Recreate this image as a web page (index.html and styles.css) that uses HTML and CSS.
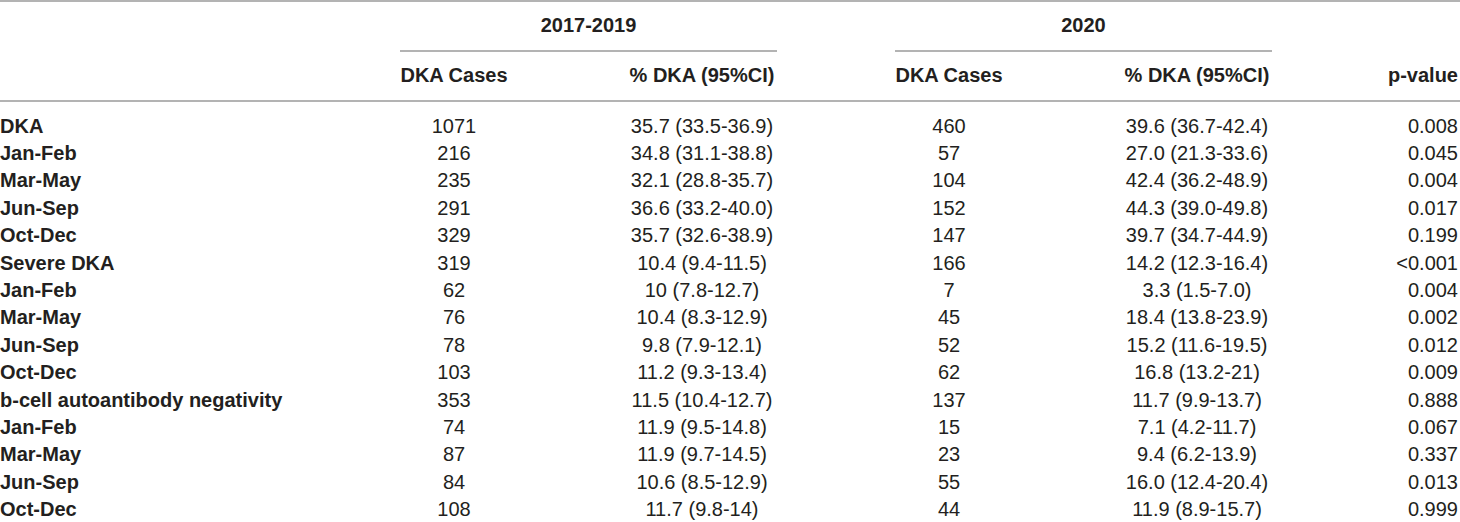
FILE: index.html
```html
<!DOCTYPE html>
<html>
  <head>
    <meta name='viewport' content='width=device-width, initial-scale=1'>
    <title>DKA Table</title>
    <link rel="stylesheet" href="styles.css">
  </head>
<body>

<table class='dka'>
  <colgroup>
    <col class='c-label'>
    <col class='c-cases'>
    <col class='c-pct'>
    <col class='c-cases2'>
    <col class='c-pct'>
    <col class='c-p'>
  </colgroup>
  <thead>
    <tr class='group'>
      <th></th>
      <th colspan=2><div class='grp'>2017-2019</div></th>
      <th colspan=2 class='grp2'><div class='grp'>2020</div></th>
      <th></th>
    </tr>
    <tr class='sub'>
      <th></th>
      <th class='num'>DKA Cases</th>
      <th class='pct'>% DKA (95%CI)</th>
      <th class='num2'>DKA Cases</th>
      <th class='pct'>% DKA (95%CI)</th>
      <th class='pv'>p-value</th>
    </tr>
  </thead>
  <tbody>
    <tr><td class='lbl'>DKA</td><td class='num'>1071</td><td class='pct'>35.7 (33.5-36.9)</td><td class='num2'>460</td><td class='pct'>39.6 (36.7-42.4)</td><td class='pv'>0.008</td></tr>
    <tr><td class='lbl'>Jan-Feb</td><td class='num'>216</td><td class='pct'>34.8 (31.1-38.8)</td><td class='num2'>57</td><td class='pct'>27.0 (21.3-33.6)</td><td class='pv'>0.045</td></tr>
    <tr><td class='lbl'>Mar-May</td><td class='num'>235</td><td class='pct'>32.1 (28.8-35.7)</td><td class='num2'>104</td><td class='pct'>42.4 (36.2-48.9)</td><td class='pv'>0.004</td></tr>
    <tr><td class='lbl'>Jun-Sep</td><td class='num'>291</td><td class='pct'>36.6 (33.2-40.0)</td><td class='num2'>152</td><td class='pct'>44.3 (39.0-49.8)</td><td class='pv'>0.017</td></tr>
    <tr><td class='lbl'>Oct-Dec</td><td class='num'>329</td><td class='pct'>35.7 (32.6-38.9)</td><td class='num2'>147</td><td class='pct'>39.7 (34.7-44.9)</td><td class='pv'>0.199</td></tr>
    <tr><td class='lbl'>Severe DKA</td><td class='num'>319</td><td class='pct'>10.4 (9.4-11.5)</td><td class='num2'>166</td><td class='pct'>14.2 (12.3-16.4)</td><td class='pv'>&lt;0.001</td></tr>
    <tr><td class='lbl'>Jan-Feb</td><td class='num'>62</td><td class='pct'>10 (7.8-12.7)</td><td class='num2'>7</td><td class='pct'>3.3 (1.5-7.0)</td><td class='pv'>0.004</td></tr>
    <tr><td class='lbl'>Mar-May</td><td class='num'>76</td><td class='pct'>10.4 (8.3-12.9)</td><td class='num2'>45</td><td class='pct'>18.4 (13.8-23.9)</td><td class='pv'>0.002</td></tr>
    <tr><td class='lbl'>Jun-Sep</td><td class='num'>78</td><td class='pct'>9.8 (7.9-12.1)</td><td class='num2'>52</td><td class='pct'>15.2 (11.6-19.5)</td><td class='pv'>0.012</td></tr>
    <tr><td class='lbl'>Oct-Dec</td><td class='num'>103</td><td class='pct'>11.2 (9.3-13.4)</td><td class='num2'>62</td><td class='pct'>16.8 (13.2-21)</td><td class='pv'>0.009</td></tr>
    <tr><td class='lbl'>b-cell autoantibody negativity</td><td class='num'>353</td><td class='pct'>11.5 (10.4-12.7)</td><td class='num2'>137</td><td class='pct'>11.7 (9.9-13.7)</td><td class='pv'>0.888</td></tr>
    <tr><td class='lbl'>Jan-Feb</td><td class='num'>74</td><td class='pct'>11.9 (9.5-14.8)</td><td class='num2'>15</td><td class='pct'>7.1 (4.2-11.7)</td><td class='pv'>0.067</td></tr>
    <tr><td class='lbl'>Mar-May</td><td class='num'>87</td><td class='pct'>11.9 (9.7-14.5)</td><td class='num2'>23</td><td class='pct'>9.4 (6.2-13.9)</td><td class='pv'>0.337</td></tr>
    <tr><td class='lbl'>Jun-Sep</td><td class='num'>84</td><td class='pct'>10.6 (8.5-12.9)</td><td class='num2'>55</td><td class='pct'>16.0 (12.4-20.4)</td><td class='pv'>0.013</td></tr>
    <tr><td class='lbl'>Oct-Dec</td><td class='num'>108</td><td class='pct'>11.7 (9.8-14)</td><td class='num2'>44</td><td class='pct'>11.9 (8.9-15.7)</td><td class='pv'>0.999</td></tr>
  </tbody>
</table>

</body>
</html>
```

FILE: styles.css
```css
* {font-family: "Liberation Sans", Arial, Helvetica, sans-serif; box-sizing: border-box;}

body {margin: 0; background: #fff; color: #231f20;}

.dka {width: 1460px; border-collapse: collapse; table-layout: fixed; border-top: 2px solid #b3b3b3; font-size: 20px; line-height: 27.4px;}

/* column widths, padding inside a column keeps the text centred on the original spots */
.c-label {width: 400px;}
.c-cases {width: 108px;}
.c-pct {width: 269px;}
.c-cases2 {width: 226px;}
.c-p {width: 188px;}

th, td {padding: 0; font-weight: normal; white-space: nowrap;}
th {font-weight: bold;}

.group th {padding: 0; vertical-align: top;}
.grp {padding: 10px 0 10.6px; border-bottom: 2px solid #b3b3b3; text-align: center;}
.grp2 {padding-left: 118px !important;}

.sub {border-bottom: 2px solid #b3b3b3;}
.sub th {padding-top: 10px; padding-bottom: 10.6px;}

.num {text-align: center;}
.num2 {text-align: center; padding-left: 118px !important;}
.pct {text-align: center; padding-left: 119px !important;}
.pv {text-align: right; padding-right: 2px !important;}
.lbl {font-weight: bold; text-align: left;}

tbody tr:first-child td {padding-top: 10.5px;}
```
